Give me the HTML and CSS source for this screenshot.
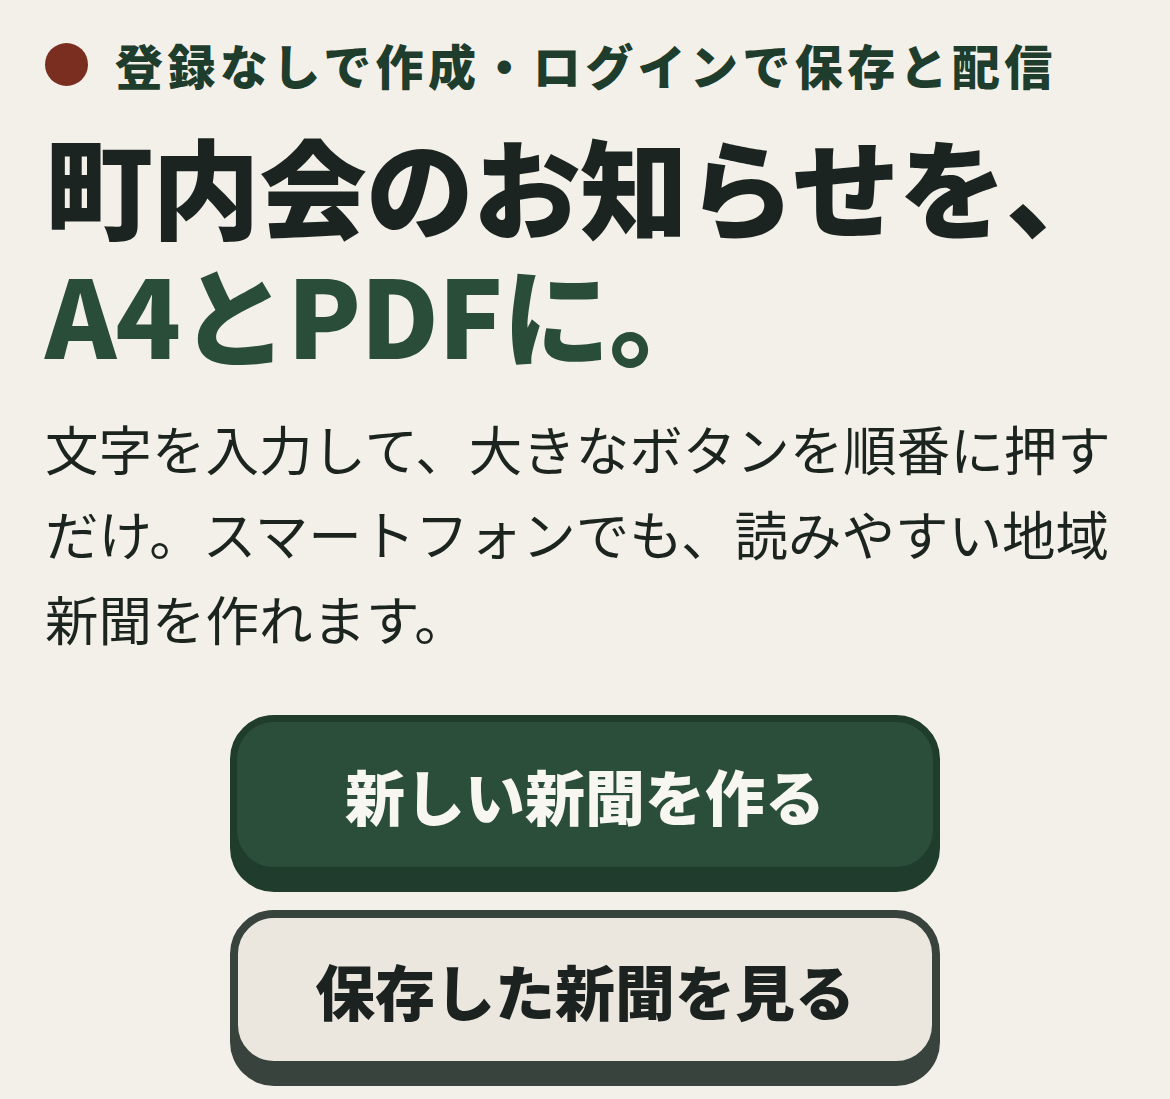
FILE: index.html
```html
<!DOCTYPE html>
<html lang="ja">
<head>
<meta charset="utf-8">
<title>町内会のお知らせ</title>
<link rel="stylesheet" href="styles.css">
</head>
<body>
<main class="hero">
  <p class="eyebrow"><span class="dot"></span><span>登録なしで作成・ログインで保存と配信</span></p>
  <h1 class="title">町内会のお知らせを、<br><span class="accent">A4とPDFに。</span></h1>
  <p class="lead">文字を入力して、大きなボタンを順番に押すだけ。スマートフォンでも、読みやすい地域新聞を作れます。</p>
  <div class="actions">
    <a class="btn btn-primary" href="#">新しい新聞を作る</a>
    <a class="btn btn-secondary" href="#">保存した新聞を見る</a>
  </div>
</main>
</body>
</html>
```
FILE: styles.css
```css
html, body {
  margin: 0;
  padding: 0;
}
body {
  background: #f3f0e9;
  font-family: "Noto Sans CJK JP", "Noto Sans", sans-serif;
  color: #1c2420;
}
.hero {
  padding: 30px 45px 60px;
  display: flex;
  flex-direction: column;
}
.eyebrow {
  margin: 0;
  display: flex;
  align-items: center;
  gap: 27px;
  font-size: 48px;
  line-height: 68px;
  font-weight: 900;
  letter-spacing: 4.4px;
  color: #1f3d2c;
}
.dot {
  width: 43px;
  height: 43px;
  border-radius: 50%;
  background: #7a2e1f;
  flex: none;
}
.title {
  margin: 22px 0 0;
  font-size: 108px;
  line-height: 128px;
  font-weight: 900;
  letter-spacing: -1px;
  color: #1b2420;
}
.accent {
  color: #2a4d3a;
}
.lead {
  margin: 29px 0 0;
  font-size: 53.5px;
  line-height: 85px;
  font-weight: 400;
  color: #1c2420;
}
.actions {
  margin-top: 55px;
  display: flex;
  flex-direction: column;
  align-items: center;
  gap: 36px;
}
.btn {
  box-sizing: border-box;
  flex: none;
  width: 710px;
  height: 159px;
  border-radius: 44px;
  display: flex;
  align-items: center;
  justify-content: center;
  text-decoration: none;
  font-size: 60px;
  font-weight: 900;
  letter-spacing: 0;
}
.btn-primary {
  background: #2b4e3b;
  color: #f8f6f0;
  border: 7px solid #1f3c2c;
  box-shadow: 0 18px 0 #1f3c2c;
}
.btn-secondary {
  background: #ebe7df;
  color: #1b2220;
  border: 8px solid #38433e;
  box-shadow: 0 17px 0 #38433e;
}
```
